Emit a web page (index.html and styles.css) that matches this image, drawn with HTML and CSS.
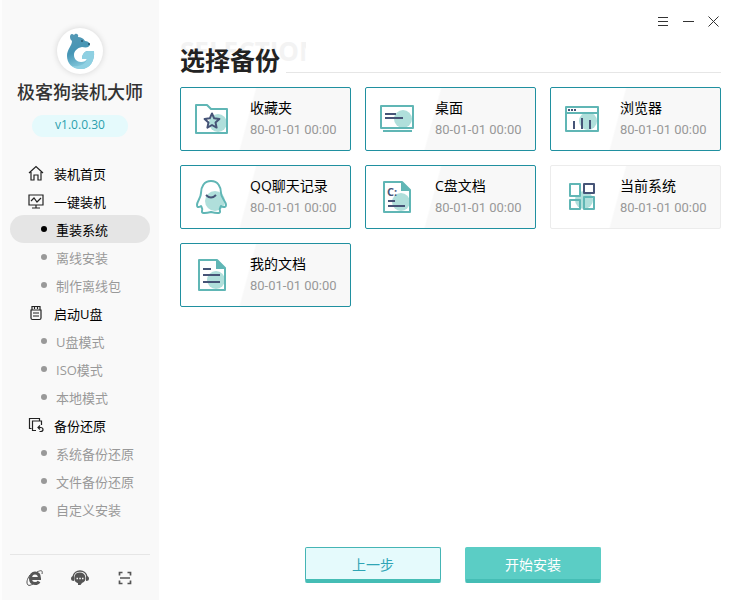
FILE: index.html
```html
<!DOCTYPE html>
<html lang="zh-CN">
<head>
<meta charset="UTF-8">
<title>极客狗装机大师</title>
<link rel="stylesheet" href="styles.css">
</head>
<body>
  <aside class="sidebar">
    <div class="brand">
      <div class="logo">
        <svg width="46" height="46" viewBox="0 0 46 46">
          <defs>
            <linearGradient id="bear" x1="0" y1="0" x2="0.3" y2="1">
              <stop offset="0" stop-color="#5799b5"/>
              <stop offset="0.55" stop-color="#4595b5"/>
              <stop offset="1" stop-color="#85c9dc"/>
            </linearGradient>
          </defs>
          <path fill="url(#bear)" d="M13 9c0-3 2-4 4-2l1-1c2-1 4 1 3 3 3 0 5 1 7 4 2 0 4 1 5 3 0 3-3 4-8 3-5 1-8 4-8 8 0 4 3 7 7 7 3 0 5-1 6-3h-5c0-5 3-8 6-8h6c1 10-4 18-13 18-9 0-14-6-14-13 0-7 5-10 5-15-1-1-2-2-2-4z"/>
          <path fill="#8fd0e2" d="M25 31c0-5 3-8 6-8h6c1 10-4 18-13 18-4 0-7-1-9-3 7 1 13-1 15-7z"/>
          <circle cx="25" cy="13" r="1" fill="#28566e"/>
          <circle cx="32" cy="16" r="1" fill="#28566e"/>
        </svg>
      </div>
      <h1>极客狗装机大师</h1>
      <span class="version">v1.0.0.30</span>
    </div>

    <nav class="menu">
      <a href="#" class="group">
        <svg width="16" height="16" viewBox="0 0 16 16"><path d="M1 8L8 1.5 15 8M3 7v8h3v-5h4v5h3V7"/></svg>
        装机首页
      </a>
      <a href="#" class="group">
        <svg width="16" height="16" viewBox="0 0 16 16"><path d="M1 2h14v10H1zM8 12v3M4 15h8M3 8l3-3 3 4 4-4"/></svg>
        一键装机
      </a>
      <a href="#" class="item active">重装系统</a>
      <a href="#" class="item">离线安装</a>
      <a href="#" class="item">制作离线包</a>
      <a href="#" class="group">
        <svg width="16" height="16" viewBox="0 0 16 16"><path d="M4 5V1.5h8V5M6.500 2v2M9.500 2v2M3 5h10v8q0 1.500-1.500 1.500h-7Q3 14.500 3 13zM5 8h6M5 11h6"/></svg>
        启动U盘
      </a>
      <a href="#" class="item">U盘模式</a>
      <a href="#" class="item">ISO模式</a>
      <a href="#" class="item">本地模式</a>
      <a href="#" class="group">
        <svg width="16" height="16" viewBox="0 0 16 16"><path d="M3.500 11.500H1.500v-10h10v2M8 13.500H4.500v-9.500h9V8M12 8.500l-2 2 2 2M10 10.500h2.500q2.500 0 2.500 2t-2.500 2h-1"/></svg>
        备份还原
      </a>
      <a href="#" class="item">系统备份还原</a>
      <a href="#" class="item">文件备份还原</a>
      <a href="#" class="item">自定义安装</a>
    </nav>

    <div class="tools">
      <button type="button" aria-label="浏览器">
        <svg width="18" height="18" viewBox="0 0 18 18" fill="none" stroke="#555">
          <path stroke-width="3" d="M4.500 9.500h9c0-4-2-5.500-4.500-5.500S4.500 6 4.500 9.500s2 5 4.500 5c2 0 3.500-1 4-2"/>
          <path d="M11 3c4-2 6-2 5 2M4 6C1 10 0 14 2 16c1 1 3 0 5-1"/>
        </svg>
      </button>
      <button type="button" aria-label="在线客服">
        <svg width="18" height="18" viewBox="0 0 18 18">
          <path d="M2 8C3 0 15 0 16 8" fill="none" stroke="#555" stroke-width="1.500"/>
          <path fill="#555" d="M9 3.500a5.500 5.500 0 0 1 2 10.600L9.500 16H7v-1.800A5.500 5.500 0 0 1 9 3.500zM3 7v5Q0 12 0 9.500T3 7zM15 7v5q3 0 3-2.500T15 7z"/>
          <path stroke="#f9f9f9" stroke-width="1.500" d="M5.500 9.500h1.500M8.300 9.500h1.500M11 9.500h1.500"/>
        </svg>
      </button>
      <button type="button" aria-label="扫码">
        <svg width="18" height="18" viewBox="0 0 18 18" fill="none" stroke="#555" stroke-width="1.700"><path d="M3.500 6.500v-3h3M11.500 3.500h3v3M14.500 11.500v3h-3M6.500 14.500h-3v-3M4 9h10"/></svg>
      </button>
    </div>
  </aside>

  <main class="content">
    <div class="window-bar">
      <button type="button" aria-label="菜单"><svg width="13" height="13" viewBox="0 0 13 13"><path d="M1 2.500h10M1 6.500h10M1 10.500h10"/></svg></button>
      <button type="button" aria-label="最小化"><svg width="13" height="13" viewBox="0 0 13 13"><path d="M1 6.500h11"/></svg></button>
      <button type="button" aria-label="关闭"><svg width="13" height="13" viewBox="0 0 13 13"><path d="M1.500 1.500l10 10M11.500 1.500l-10 10"/></svg></button>
    </div>

    <div class="heading">
      <span class="ghost" aria-hidden="true">SELECTION</span>
      <h2>选择备份</h2>
    </div>

    <div class="cards">
      <button type="button" class="card selected">
        <svg class="icon" width="36" height="36" viewBox="0 0 36 36">
          <circle cx="25" cy="22" r="9" fill="#b0dfdb"/>
          <path class="line" d="M3 4h11l4 4h16v24H3z"/>
          <path class="dark" d="M19 12.500l2.200 4.800 5.200.6-3.900 3.500 1.100 5.200-4.600-2.600-4.600 2.600 1.100-5.200-3.900-3.500 5.200-.6z"/>
        </svg>
        <span class="info"><b>收藏夹</b><small>80-01-01 00:00</small></span>
      </button>
      <button type="button" class="card selected">
        <svg class="icon" width="36" height="36" viewBox="0 0 36 36">
          <circle cx="25" cy="18" r="9" fill="#b0dfdb"/>
          <path class="line" d="M3 5h32v22H3zM5 30h29"/>
          <path class="dark" d="M7 13h11M7 17h18"/>
        </svg>
        <span class="info"><b>桌面</b><small>80-01-01 00:00</small></span>
      </button>
      <button type="button" class="card selected">
        <svg class="icon" width="36" height="36" viewBox="0 0 36 36">
          <circle cx="25" cy="20" r="9" fill="#b0dfdb"/>
          <path class="line" d="M3 6h32v24H3zM3 12h32"/>
          <path class="dark" d="M5 9h2M8 9h2M11 9h2M11 20v8M19 17v11M27 19v9"/>
        </svg>
        <span class="info"><b>浏览器</b><small>80-01-01 00:00</small></span>
      </button>
      <button type="button" class="card selected">
        <svg class="icon" width="36" height="36" viewBox="0 0 36 36">
          <circle cx="22" cy="22" r="10" fill="#b0dfdb"/>
          <path class="line" d="M18 2C11 2 8 8 8 14c0 5-4 8-4 12 0 2 1 3 4 1 1 2 2 3 1 5-1 3 5 2 9 1 4 1 10 2 9-1-1-2 0-3 1-5 3 2 5 1 5-1 0-4-5-7-5-12 0-6-3-12-10-12z"/>
          <path class="dark" d="M13 16q5 5 10 0"/>
        </svg>
        <span class="info"><b>QQ聊天记录</b><small>80-01-01 00:00</small></span>
      </button>
      <button type="button" class="card selected">
        <svg class="icon" width="36" height="36" viewBox="0 0 36 36">
          <circle cx="23" cy="23" r="9" fill="#b0dfdb"/>
          <path class="line" d="M6 3h18l8 8v22H6z"/>
          <path d="M23 2l10 10H23z" fill="#60b6b5"/>
          <path class="dark" d="M10 22h7M10 27h17"/>
          <text x="9" y="17">C:</text>
        </svg>
        <span class="info"><b>C盘文档</b><small>80-01-01 00:00</small></span>
      </button>
      <button type="button" class="card">
        <svg class="icon" width="36" height="36" viewBox="0 0 36 36">
          <circle cx="21" cy="21" r="9" fill="#b0dfdb"/>
          <path class="line white" d="M7 5h10v12H7z"/>
          <path class="line" d="M7 21h10v9H7zM21 18h10v12h-10z"/>
          <path class="dark white" d="M21 5h10v9h-10z"/>
        </svg>
        <span class="info"><b>当前系统</b><small>80-01-01 00:00</small></span>
      </button>
      <button type="button" class="card selected">
        <svg class="icon" width="36" height="36" viewBox="0 0 36 36">
          <circle cx="23" cy="23" r="9" fill="#b0dfdb"/>
          <path class="line" d="M6 3h18l8 8v22H6z"/>
          <path d="M23 2l10 10H23z" fill="#60b6b5"/>
          <path class="dark" d="M10 12h8M10 18h17M10 25h17"/>
        </svg>
        <span class="info"><b>我的文档</b><small>80-01-01 00:00</small></span>
      </button>
    </div>

    <div class="actions">
      <button type="button" class="btn">上一步</button>
      <button type="button" class="btn primary">开始安装</button>
    </div>
  </main>
</body>
</html>
```
FILE: styles.css
```css
* {
  box-sizing: border-box;
}
body {
  margin: 0;
  display: flex;
  min-height: 100vh;
  font-family: "Open Sans", "Noto Sans CJK SC", sans-serif;
  font-size: 13px;
  color: #000;
  background: #fff;
}
button {
  font-family: inherit;
  padding: 0;
  border: none;
  background: none;
  cursor: pointer;
}
svg {
  display: block;
}

/* Sidebar */
.sidebar {
  flex: 0 0 159px;
  display: flex;
  flex-direction: column;
  padding: 28px 9px 0 8px;
  background: #f9f9f9;
  border-left: 2px solid #fdfdfd;
}
.brand {
  display: flex;
  flex-direction: column;
  align-items: center;
}
.logo {
  border-radius: 50%;
  background: #fff;
  box-shadow: 0 0 6px rgba(0,0,0,0.15);
}
h1 {
  margin: 4px 0 9px;
  font-size: 18px;
  line-height: 28px;
  font-weight: 500;
  color: #333;
  white-space: nowrap;
}
.version {
  width: 96px;
  line-height: 20px;
  border-radius: 11px;
  padding-bottom: 2px;
  font-size: 12px;
  text-align: center;
  color: #2b9fad;
  background: #e5fafc;
}
.menu {
  margin-top: 22px;
}
.menu a {
  display: flex;
  align-items: center;
  height: 28px;
  color: #000;
  text-decoration: none;
  white-space: nowrap;
}
.menu svg {
  margin-right: 10px;
  fill: none;
  stroke: #222;
  stroke-width: 1.2;
}
.menu .group {
  padding-left: 18px;
}
.menu .item {
  padding-left: 31px;
  border-radius: 14px;
  color: #999;
}
.menu .item::before {
  content: "";
  width: 6px;
  height: 6px;
  margin-right: 9px;
  border-radius: 50%;
  background: #999;
}
.menu .active {
  color: #000;
  background: #e5e5e5;
}
.menu .active::before {
  background: #000;
}
.tools {
  display: flex;
  align-items: center;
  justify-content: space-between;
  height: 46px;
  margin-top: auto;
  padding: 0 16px;
  border-top: 1px solid #e6e6e6;
}

/* Content */
.content {
  flex: 1;
  display: flex;
  flex-direction: column;
  padding: 14px 19px 17px 21px;
}
.window-bar {
  display: flex;
  justify-content: flex-end;
  gap: 12px;
  padding-right: 1px;
}
.window-bar svg {
  fill: none;
  stroke: #333;
}
.window-bar button {
  height: 14px;
}
.heading {
  position: relative;
  display: flex;
  align-items: flex-end;
  height: 48px;
  margin-bottom: 11px;
}
.heading::after {
  content: "";
  flex: 1;
  height: 1px;
  margin: 0 0 3px 6px;
  background: #e6e6e6;
}
.ghost {
  position: absolute;
  left: 0;
  top: 6px;
  width: 126px;
  overflow: hidden;
  font-size: 26px;
  line-height: 34px;
  font-weight: bold;
  color: #f3f3f3;
}
h2 {
  position: relative;
  margin: 0;
  font-size: 25px;
  line-height: 32px;
  font-weight: bold;
  color: #222;
}
.cards {
  display: grid;
  grid-template-columns: repeat(3, 1fr);
  gap: 14px;
}
.card {
  display: flex;
  align-items: center;
  height: 64px;
  padding-left: 12px;
  border: 1px solid #ececec;
  border-radius: 2px;
  text-align: left;
  background: linear-gradient(105deg, #fff 40%, #f8f8f8 41%);
}
.card.selected {
  border-color: #2090a0;
}
.icon {
  margin-right: 21px;
}
.line, .dark {
  fill: none;
  stroke: #60b6b5;
  stroke-width: 2;
  stroke-linejoin: round;
}
.dark {
  stroke: #465477;
}
.white {
  fill: #fff;
}
.icon text {
  font-size: 11px;
  font-weight: bold;
  fill: #465477;
}
.info b, .info small {
  display: block;
  font-size: 14px;
  line-height: 22px;
  font-weight: normal;
  color: #000;
  white-space: nowrap;
}
.info small {
  font-family: Roboto, sans-serif;
  font-size: 13px;
  color: #999;
}
.actions {
  display: flex;
  justify-content: center;
  gap: 24px;
  margin-top: auto;
  padding-left: 5px;
}
.btn {
  width: 136px;
  height: 36px;
  border: 1px solid #45b5b5;
  border-bottom: 4px solid #45bdb5;
  border-radius: 2px;
  font-size: 14px;
  color: #30a5b5;
  background: #e5fafc;
}
.btn.primary {
  border-color: #5bcdc5 #5bcdc5 #45bdb5;
  color: #fff;
  background: #5bcdc5;
}
```
